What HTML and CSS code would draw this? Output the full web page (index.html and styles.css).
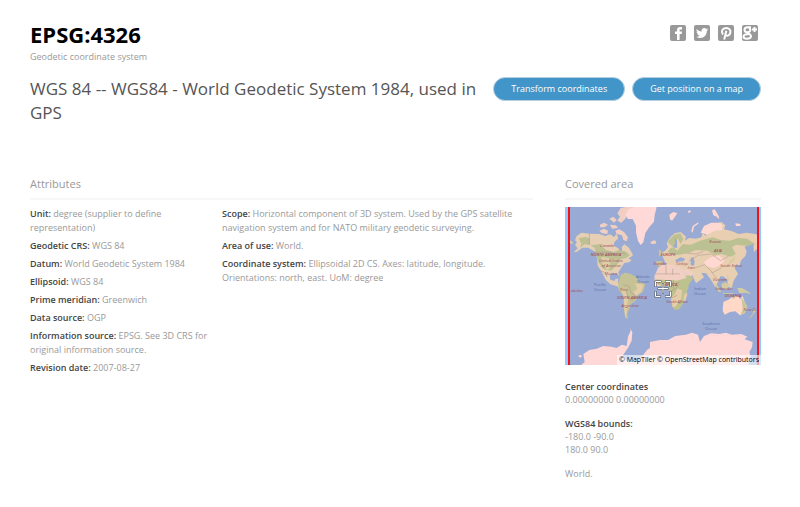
FILE: index.html
```html
<!DOCTYPE html>
<html lang="en">
<head>
<meta charset="utf-8">
<meta name="viewport" content="width=device-width, initial-scale=1">
<title>EPSG:4326</title>
<link rel="stylesheet" href="styles.css">
</head>
<body>
<main class="page">
  <header class="top">
    <div>
      <h1 class="code">EPSG:4326</h1>
      <p class="kind">Geodetic coordinate system</p>
    </div>
    <nav class="social" aria-label="Share">
      <a href="#" aria-label="Facebook"><svg viewBox="0 0 16 16"><rect width="16" height="16" rx="2"/><path class="w" d="M7 15V9H5V6.500h2V5c0-2 1-3 3-3h2v2.500h-1.300C10 4.500 9.600 4.800 9.600 5.500v1H12L11.700 9H9.600v6z"/></svg></a>
      <a href="#" aria-label="Twitter"><svg viewBox="0 0 16 16"><rect width="16" height="16" rx="2"/><path class="w" d="M2.500 4C4 5.500 5.700 6.400 7.700 6.500 7.300 4.500 8.500 3 10.200 3c.8 0 1.500.3 2 .9l1.600-.6-.9 1.500 1.400-.4-1.500 1.600c.1 4-2.800 7-6.400 7-1.600 0-3-.4-4.100-1.200 1.400.1 2.700-.3 3.600-1-1.200-.1-2-.8-2.400-1.800h1.100C3.400 8.600 2.600 7.700 2.600 6.400l1.100.3C2.600 5.900 2.300 5 2.500 4z"/></svg></a>
      <a href="#" aria-label="Pinterest"><svg viewBox="0 0 16 16"><rect width="16" height="16" rx="2"/><path class="line" d="M5 9.500C2.500 6.500 4.500 3 8.200 3c3 0 4.600 2 4.200 4.400-.4 2.700-3 4.200-4.900 2.500M8.300 5.800 6.200 14.500"/></svg></a>
      <a href="#" aria-label="Google Plus"><svg viewBox="0 0 16 16"><rect width="16" height="16" rx="2"/><path class="line" d="M9 2.200H5.500c-4 0-4 5 0 5s3.500-5 0-5M7 7.200c-1.500 1.200 2.500 2 2 4.300-.6 3-7.500 3-7.500 0 0-2 2.500-2.500 5.500-2.500M10 4.500h5M12.500 2v5"/></svg></a>
    </nav>
  </header>

  <section class="headline">
    <h2 class="name">WGS 84 -- WGS84 - World Geodetic System 1984, used in GPS</h2>
    <div class="actions">
      <a class="btn" href="#">Transform coordinates</a>
      <a class="btn" href="#">Get position on a map</a>
    </div>
  </section>

  <div class="columns">
    <section class="attributes">
      <h3 class="heading">Attributes</h3>
      <div class="lists">
        <div class="list">
          <p><b>Unit:</b> degree (supplier to define representation)</p>
          <p><b>Geodetic CRS:</b> WGS 84</p>
          <p><b>Datum:</b> World Geodetic System 1984</p>
          <p><b>Ellipsoid:</b> WGS 84</p>
          <p><b>Prime meridian:</b> Greenwich</p>
          <p><b>Data source:</b> OGP</p>
          <p><b>Information source:</b> EPSG. See 3D CRS for original information source.</p>
          <p><b>Revision date:</b> 2007-08-27</p>
        </div>
        <div class="list">
          <p><b>Scope:</b> Horizontal component of 3D system. Used by the GPS satellite navigation system and for NATO military geodetic surveying.</p>
          <p><b>Area of use:</b> World.</p>
          <p><b>Coordinate system:</b> Ellipsoidal 2D CS. Axes: latitude, longitude. Orientations: north, east. UoM: degree</p>
        </div>
      </div>
    </section>

    <aside class="area">
      <h3 class="heading">Covered area</h3>
      <div class="map">
        <svg viewBox="0 0 196 158" role="img" aria-label="World map">
          <rect width="196" height="158" fill="#99abd4"/>
          <!-- The Americas, north -->
          <g transform="translate(-5 -7) scale(.33333)">
            <path fill="#e6cfb5" d="M50 108l14-10 24 3 30 1 18 6 14-5 12 8 8-10 5 14-12 12-2 10 14 8 6 10 6-2-2-12 8-8 14 10 12 22-6 6-8 4 10 6-8 6-14 2-8 12-10 16 4 12-8-8-12-2-10 6 2 14 12 4 4-7 8 0-2 12 10 6 4 12 10 2-10 3-16-12-20-6-14-14-12-24-12-18-2-22-6-20-20-12-18 0-16 12-10 2 12-12-8-10 6-8-6-6z"/>
            <path fill="#bcc093" d="M56 115l20-4 12 4 2 20-16-2-14 10 4-12zM92 136l28-4 18 18 24 6 14-6 20 4 14 12-12 8-16 4-12 18-16 16-22-4-16-20-8-24-4-20z"/>
            <path fill="#dfcda7" d="M126 170l20 4 6 20-8 18-16-20-6-14zM154 178l18 0-10 12z"/>
            <path fill="#f0cfc2" d="M120 74l12-6 12 6-10 8-14 0zM118 92l14-6 12 6-2 10-16-2zM148 56l12-6 10 10-8 8zM150 74l18 2 6 8-18 2zM166 92l12-4 14 8 12 16-4 12-10-4-4-14-16-4zM172 40l10-16 20-4 18 2-16 14-6 18-14 14-12-6 8-12z"/>
            <path fill="#ffd8d8" d="M206 28l14-7h70l-6 24-2 20-14 16-12 18-6 28-8 8-8-12-6-26 0-20-10-20-14 0-8-12z"/>
            <path fill="#f0cfc2" d="M271 127l10-6 8 3-2 7-12 1z"/>
            <path fill="#d6cea4" d="M192 218l12 3 14 4-10 2-14-4zM18 118h8l14 10-4 4-8-4-10 4z"/>
            <path fill="none" stroke="#b39b94" stroke-width="2" d="M88 101v33M102 157h52l14 8 18-6 12 3M116 211l18 6 8 14"/>
          </g>
          <!-- South America and Antarctica, west -->
          <g transform="translate(-5 73) scale(.33333)">
            <path fill="#c5c396" d="M184-18l22-2 24 12 4 12 22 8-6 22-16 12-8 18-14 8-4 16-6 12 2 16-8-2-4-24-2-42-14-18-2-20z"/>
            <path fill="#e5cdaa" d="M184 28l12 8 8 14-4 52-4 12-3-28-1-34zM226 10l24 4-6 22-16 12-8-12 12-10z"/>
            <path fill="none" stroke="#b39b94" stroke-width="2" d="M190 14l18 6 4 18 14 8-8 16-14-8-4-18"/>
            <path fill="#ffd8d8" d="M60 258l14-12-4-24 18-12 22-4 20-8 24 2 16 4 16-10 14 4 4-28 8-18-3-8 8 12-2 26-10 20-16 24 10 16 30-2 20-14 12-16 28-20 24-4v74z"/>
            <path fill="#ffd8d8" d="M54 228l8-4 4 5-6 4z"/>
          </g>
          <!-- Eurasia and northern Africa -->
          <g transform="translate(95 -7) scale(.33333)">
            <path fill="#e9cfb2" d="M4 160l12-8 8-10-4-14 12-18 12-10 18-4 16 14-4 12 14-8 20 2 16-4 4-12 10 8 2-22 20-14 24-6 12 10-4 12 24 6 20 8 24-4 26 4 20 4 20 10-2 8-18 4-16 20-8 8-2-18 4-8-20 4-10 8 6 12-4 14-12 12-6 18-8-6-6 12 10 18-12 18-8 24-10-4-2-20-10-10-10-2-16 34-14-24-14-18-14-2 8 14-24 18-12-26-12-8-18-2-12-14-16 4-18-6z"/>
            <path fill="#bbc192" d="M22 126l20-22 20-4 8 18-8 14-10-18-6 26-14 4-10 12 24 10 38-6 24-10 34 2 24 14 18-4 28 8 16-8-12-20 12-8 34 4 22-6-22-16-28-2-24 8-28-2-24-8-38 10-28 12-24-2-16 20z"/>
            <path fill="#ffd8d2" d="M122 98l10-20 22-10 24 0 10 8-2 14-22 2-22 12zM28 44l12-8 12 4-8 12-8 10-6-4zM84 34l6-3 3 4-8 4zM156 31l8-3 12 20 2 10-8-8-10-4zM94 94l4-16 18-12-2 6-12 8-4 18zM226 70l16 2-2 6-12 0zM132 186l20-14 24-6 18 14-10 14-22 10-24-6z"/>
            <path fill="#f1cfc2" d="M70 210l12-2 20 12-12 12-10-4z"/>
            <path fill="#cdbf99" d="M-12 184l16-1 6 6-6 9-14 1zM-4 148l7 4 4 14-10 3z"/>
            <path fill="#f1cfc2" d="M-6 203l10-7 20-4 36 10 10 8 16 28-6 20H-12l-4-12-1-16z"/>
            <path fill="#99abd4" d="M45 112l6 10 0 22-12-2 6-10zM46 180l16-8 14 4-6 8-22 2zM92 174l8-3 4 14-2 12-10-2z"/>
            <path fill="#dacba3" d="M212 178l8-2 2-14 4 2-2 18-12 8-8 6zM200 226l4-2 4 12-4 10zM292 108l10 6-2 8-8 2z"/>
            <path fill="none" stroke="#bba198" stroke-width="2" d="M-12 222h72M18 196v54M38 206v44M86 184l28-18 40-4 28 20 24-14M104 204l30-10 24 24 26-14M82 160l28 2 20-8M154 216l18 22"/>
          </g>
          <!-- Africa, Oceania and Antarctica, east -->
          <g transform="translate(95 73) scale(.33333)">
            <path fill="#bdc28f" d="M-14-2L-10 10 4 18l16-4 6 8v12l8 24 2 20 8 12 14-2 12-18 4-26 10-16 2-14 14-20-14-8z"/>
            <path fill="#e6cda9" d="M32 52l12-8 8-18 14 4-2 26-18 24-8 2zM72 46l8-10 2 8-6 18-6 2z"/>
            <path fill="#f1cfc2" d="M-16-16h90L80-6 50 2-12-2z"/>
            <path fill="none" stroke="#b39b83" stroke-width="2" d="M-4 0v14M10 6l20 8 28-6M28 34l16-4 12-16M34 54l18-8M40 0v28"/>
            <path fill="#d4caa0" d="M162 10l10 6 12 20-8 0zM184 12l12-6 12 8-8 16-14-6zM210 20l8-4-4 16zM232 24l14 0 20 12 8 6-18-4-18 2zM188 38l20 2 18 0-10 3-26-2z"/>
            <path fill="#ffd8c8" d="M190 66l18-8 12-10 14 0 6 10 8-10 6 18 8 14-8 20-14 6-14-12-16 2-16 8-6-12z"/>
            <path fill="#ccc69b" d="M214 50l14 0-8 8zM244 50l6 10 12 20-8 20-12 4 6-16zM280 86l8 6-14 20-8 4 12-14z"/>
            <path fill="#ffd8d8" d="M0 180l24 0 22-12 32-4 18-6 18 6 6 22 12-18 22-8 24 2 20-4 18 6 28-2 18 8-8 8 24 8-2 16-8 14 4 12-8 32H-30V186z"/>
          </g>
          <g class="sea-label">
            <text x="35" y="79">Pacific</text><text x="35" y="84">Ocean</text>
            <text x="78" y="71">Atlantic</text><text x="78" y="76">Ocean</text>
            <text x="135" y="83">Indian</text><text x="135" y="88">Ocean</text>
            <text x="146" y="118">Southern</text><text x="146" y="123">Ocean</text>
          </g>
          <g class="land-label">
            <text x="42" y="40">Canada</text><text x="41" y="49" class="big">NORTH AMERICA</text>
            <text x="46" y="55">United States</text><text x="46" y="60">of America</text><text x="46" y="68">Mexico</text>
            <text x="59" y="84">Peru</text><text x="67" y="92" class="big">SOUTH AMERICA</text><text x="65" y="100">Argentina</text>
            <text x="103" y="49" class="big">EUROPE</text><text x="95" y="58">España</text><text x="117" y="58">Türkiye</text><text x="126" y="62">Iran</text>
            <text x="150" y="36">Russia</text><text x="153" y="45" class="big">ASIA</text><text x="166" y="60">South Korea</text><text x="155" y="74">Vietnam</text>
            <text x="106" y="79" class="big">AFRICA</text><text x="112" y="96">South Africa</text><text x="159" y="83">Indonesia</text>
            <text x="168" y="90" class="big">OCEANIA</text><text x="185" y="104">New Ze</text><text x="12" y="85">okelau</text>
          </g>
          <path fill="#8bcdfb" d="M0 0h3v158H0zM193 0h3v158h-3z"/>
          <path fill="#f5101c" d="M3 0h2v158H3zM192 0h2v158h-2z"/>
          <path class="edge" d="M90.500 79v-4.500h5M101 74.500h4.500V79M105.500 85v4.500H101M95 89.500h-4.500V85M98 77v9M93.500 81.500h9"/>
          <path class="mark" d="M90.500 79v-4.500h5M101 74.500h4.500V79M105.500 85v4.500H101M95 89.500h-4.500V85M98 77v9M93.500 81.500h9"/>
        </svg>
        <div class="credit">© MapTiler © OpenStreetMap contributors</div>
      </div>
      <p class="fact"><b>Center coordinates</b><br>0.00000000 0.00000000</p>
      <p class="fact"><b>WGS84 bounds:</b><br>-180.0 -90.0<br>180.0 90.0</p>
      <p class="fact">World.</p>
    </aside>
  </div>
</main>
</body>
</html>
```
FILE: styles.css
```css
* { box-sizing: border-box; }
body {
  margin: 0;
  background: #fff;
  color: #999;
  font: 9px/14px "Open Sans", "Noto Sans", sans-serif;
}
h1, h2, h3, p { margin: 0; }
a { color: inherit; text-decoration: none; }
b { color: #444; font-weight: 600; }

.page { padding: 18px 39px 24px 30px; }

.top { display: flex; justify-content: space-between; align-items: flex-start; }
.code { color: #000; font-size: 22px; line-height: 32px; font-weight: 700; }
.social { display: flex; gap: 8px; padding: 7px 3px 0 0; }
.social a { display: block; width: 16px; height: 16px; }
.social svg { display: block; width: 100%; fill: #999; }
.social .w { fill: #fff; }
.social .line { fill: none; stroke: #fff; stroke-width: 2; }

.headline { display: flex; align-items: flex-start; justify-content: space-between; gap: 8px; margin-top: 13px; }
.name { flex: 1; color: #555; font-size: 17px; line-height: 24px; font-weight: 400; }
.actions { display: flex; gap: 7px; }
.btn {
  padding: 4px 17px;
  border: 1px solid #b5cfdf;
  border-radius: 12px;
  background: #4295c8;
  color: #fff;
  white-space: nowrap;
}

.columns { display: grid; grid-template-columns: minmax(0, 503fr) minmax(0, 196fr); gap: 32px; margin-top: 50px; }
.heading {
  margin-bottom: 7px;
  padding-bottom: 5px;
  border-bottom: 2px solid #f7f7f7;
  font-size: 11px;
  line-height: 18px;
  font-weight: 400;
}
.lists { display: grid; grid-template-columns: minmax(0, 180fr) minmax(0, 311fr); gap: 12px; }
.list { display: flex; flex-direction: column; gap: 4px; }

.map { position: relative; margin-bottom: 15px; }
.map svg { display: block; width: 100%; }
.sea-label, .land-label { font: 4px "Open Sans", sans-serif; text-anchor: middle; }
.sea-label { fill: #5a6ca6; }
.land-label { fill: #a04c58; font-style: italic; }
.land-label .big { font-weight: 600; }
.edge { fill: none; stroke: #555; stroke-width: 2; stroke-linecap: square; }
.mark { fill: none; stroke: #fff; stroke-width: 1; stroke-linecap: square; }
.credit {
  position: absolute;
  right: 0;
  bottom: 0;
  padding: 0 2px;
  background: rgba(255, 255, 255, .6);
  color: #000;
  font-size: 7px;
  line-height: 10px;
  white-space: nowrap;
}
.fact { margin-bottom: 11px; line-height: 13px; }
```
